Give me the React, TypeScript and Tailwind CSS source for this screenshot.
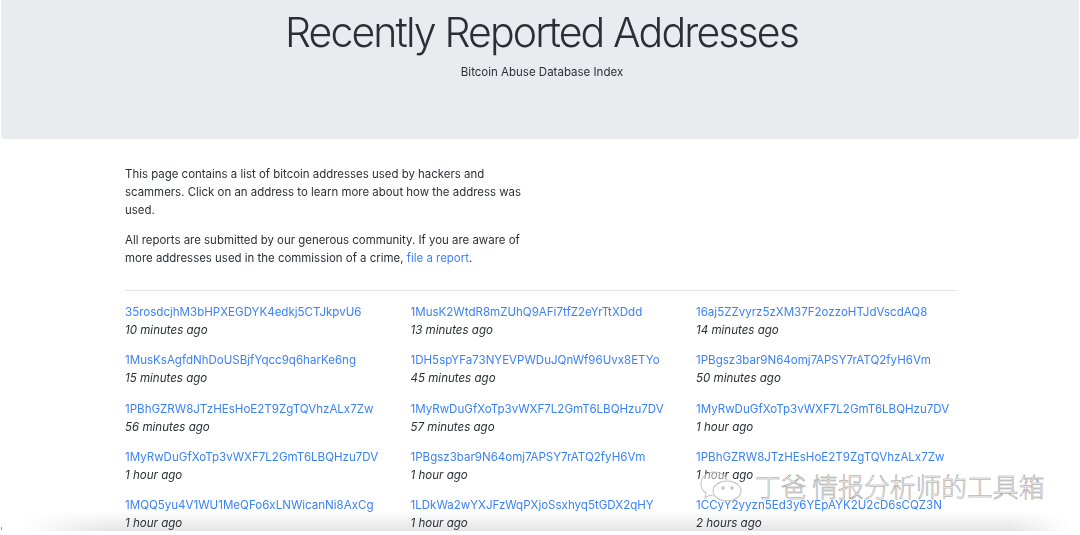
const rows = [
  ['35rosdcjhM3bHPXEGDYK4edkj5CTJkpvU6', '10 minutes ago'],
  ['1MusK2WtdR8mZUhQ9AFi7tfZ2eYrTtXDdd', '13 minutes ago'],
  ['16aj5ZZvyrz5zXM37F2ozzoHTJdVscdAQ8', '14 minutes ago'],
  ['1MusKsAgfdNhDoUSBjfYqcc9q6harKe6ng', '15 minutes ago'],
  ['1DH5spYFa73NYEVPWDuJQnWf96Uvx8ETYo', '45 minutes ago'],
  ['1PBgsz3bar9N64omj7APSY7rATQ2fyH6Vm', '50 minutes ago'],
  ['1PBhGZRW8JTzHEsHoE2T9ZgTQVhzALx7Zw', '56 minutes ago'],
  ['1MyRwDuGfXoTp3vWXF7L2GmT6LBQHzu7DV', '57 minutes ago'],
  ['1MyRwDuGfXoTp3vWXF7L2GmT6LBQHzu7DV', '1 hour ago'],
  ['1MyRwDuGfXoTp3vWXF7L2GmT6LBQHzu7DV', '1 hour ago'],
  ['1PBgsz3bar9N64omj7APSY7rATQ2fyH6Vm', '1 hour ago'],
  ['1PBhGZRW8JTzHEsHoE2T9ZgTQVhzALx7Zw', '1 hour ago'],
  ['1MQQ5yu4V1WU1MeQFo6xLNWicanNi8AxCg', '1 hour ago'],
  ['1LDkWa2wYXJFzWqPXjoSsxhyq5tGDX2qHY', '1 hour ago'],
  ['1CCyY2yyzn5Ed3y6YEpAYK2U2cD6sCQZ3N', '2 hours ago'],
]

function WechatMark() {
  return (
    <svg width="46" height="36" viewBox="0 0 46 36" fill="none" stroke="#c4c4c4" strokeWidth="1.1" aria-hidden="true">
      <path d="M28 12C26 7 21 4 15 4 8 4 2 9 2 16c0 4 2 7 5 9l-1 5 5-3c1 .4 2 .6 3 .7" fill="#fff" fillOpacity="0.45" />
      <ellipse cx="28" cy="23" rx="14" ry="10" fill="#fff" fillOpacity="0.6" />
      <circle cx="24" cy="20" r="1.2" fill="#c4c4c4" />
      <circle cx="33" cy="20" r="1.2" fill="#c4c4c4" />
    </svg>
  )
}

export default function App() {
  return (
    <div className="relative h-[531px] w-[1080px] overflow-hidden bg-white font-['Inter',sans-serif] text-[#2b2f33]">
      {/* bottom fade of the capture, under the text */}
      <div className="absolute inset-x-0 bottom-0 h-[20px] bg-gradient-to-b from-transparent to-[#e4e4e4] [mask-image:linear-gradient(to_right,transparent_20px,black_110px,black_1010px,transparent_1070px)]" />

      <div className="relative blur-[0.35px]">
        <header className="mx-[1px] h-[139px] rounded-b-[3px] bg-[#e9ebef] pt-[8px] pl-[3px] text-center">
          <h1 className="text-[41px] leading-[48px] font-light tracking-[-1.87px]">Recently Reported Addresses</h1>
          <p className="mt-[7px] pl-[1px] text-[11.5px] leading-[18px]">Bitcoin Abuse Database Index</p>
        </header>

        <main className="mr-[122px] ml-[125px] pt-[26px]">
          <div className="w-[400px] text-[11.45px] leading-[18px]">
            <p>This page contains a list of bitcoin addresses used by hackers and scammers. Click on an address to learn more about how the address was used.</p>
            <p className="mt-[12px]">
              All reports are submitted by our generous community. If you are aware of more addresses used in the commission of a crime,{' '}
              <a href="#" className="text-[#3b82f6]">file a report</a>.
            </p>
          </div>

          <hr className="mt-[23px] border-[#e3e3e3]" />

          <div className="mt-[12px] grid grid-cols-[285.5px_285.5px_1fr] gap-y-[12.25px] text-[11.55px] leading-[18px]">
            {rows.map(([address, time], i) => (
              <div key={i}>
                <a href="#" className="block text-[#3b82f6]">{address}</a>
                <em className="block">{time}</em>
              </div>
            ))}
          </div>
        </main>
      </div>

      {/* stray mark at the corner of the capture */}
      <div className="absolute bottom-[1px] left-[1px] h-[3px] w-[1px] bg-[#999]" />

      {/* watermark */}
      <div className="absolute top-[468px] left-[699px] flex items-center gap-[10px]">
        <WechatMark />
        <span className="font-['Noto_Sans_CJK_SC',sans-serif] text-[25.8px] leading-[36px] font-light whitespace-nowrap text-white/70 [-webkit-text-stroke:0.5px_#959595]">丁爸 情报分析师的工具箱</span>
      </div>
    </div>
  )
}
